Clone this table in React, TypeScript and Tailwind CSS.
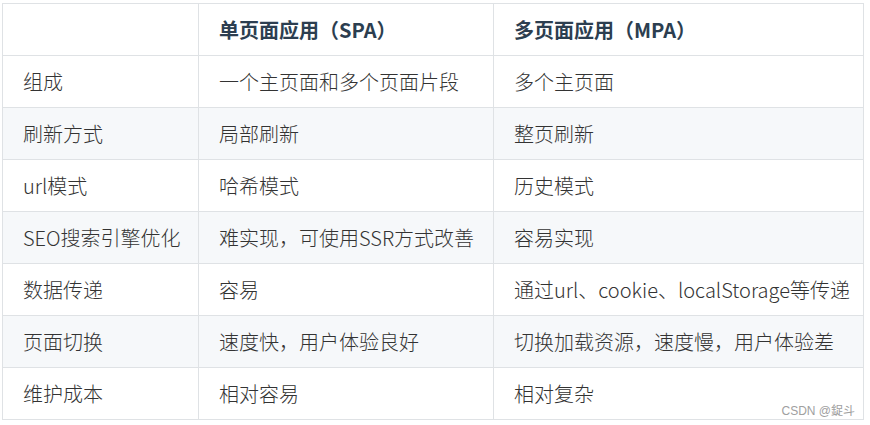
const rows: [string, string, string][] = [
  ['组成', '一个主页面和多个页面片段', '多个主页面'],
  ['刷新方式', '局部刷新', '整页刷新'],
  ['url模式', '哈希模式', '历史模式'],
  ['SEO搜索引擎优化', '难实现，可使用SSR方式改善', '容易实现'],
  ['数据传递', '容易', '通过url、cookie、localStorage等传递'],
  ['页面切换', '速度快，用户体验良好', '切换加载资源，速度慢，用户体验差'],
  ['维护成本', '相对容易', '相对复杂'],
]

const cell = 'h-[52px] flex items-center px-5 border-r border-b border-[#dfe2e5] whitespace-nowrap'

export default function App() {
  return (
    <div className="w-[870px] h-[425px] bg-white pl-[2px] pt-[3px] font-['Noto_Sans_CJK_SC',sans-serif] text-[20px] text-[#333]">
      <div className="relative w-[862px] border-l border-t border-[#dfe2e5]">
        {/* Header */}
        <div className="grid grid-cols-[196px_295px_370px]">
          <div className={cell} />
          <div className={cell + ' font-bold text-[#2c3e50]'}>单页面应用（SPA）</div>
          <div className={cell + ' font-bold text-[#2c3e50]'}>多页面应用（MPA）</div>
        </div>

        {rows.map((r, i) => (
          <div key={r[0]} className={'grid grid-cols-[196px_295px_370px] font-light ' + (i % 2 === 1 ? 'bg-[#f6f8fa]' : 'bg-white')}>
            <div className={cell}>{r[0]}</div>
            <div className={cell}>{r[1]}</div>
            <div className={cell}>{r[2]}</div>
          </div>
        ))}

        <span className="absolute right-[9px] bottom-[3px] text-[12px] leading-none text-[#a0a0a0] font-['Liberation_Sans','Noto_Sans_CJK_SC',sans-serif]">
          CSDN @鋜斗
        </span>
      </div>
    </div>
  )
}
